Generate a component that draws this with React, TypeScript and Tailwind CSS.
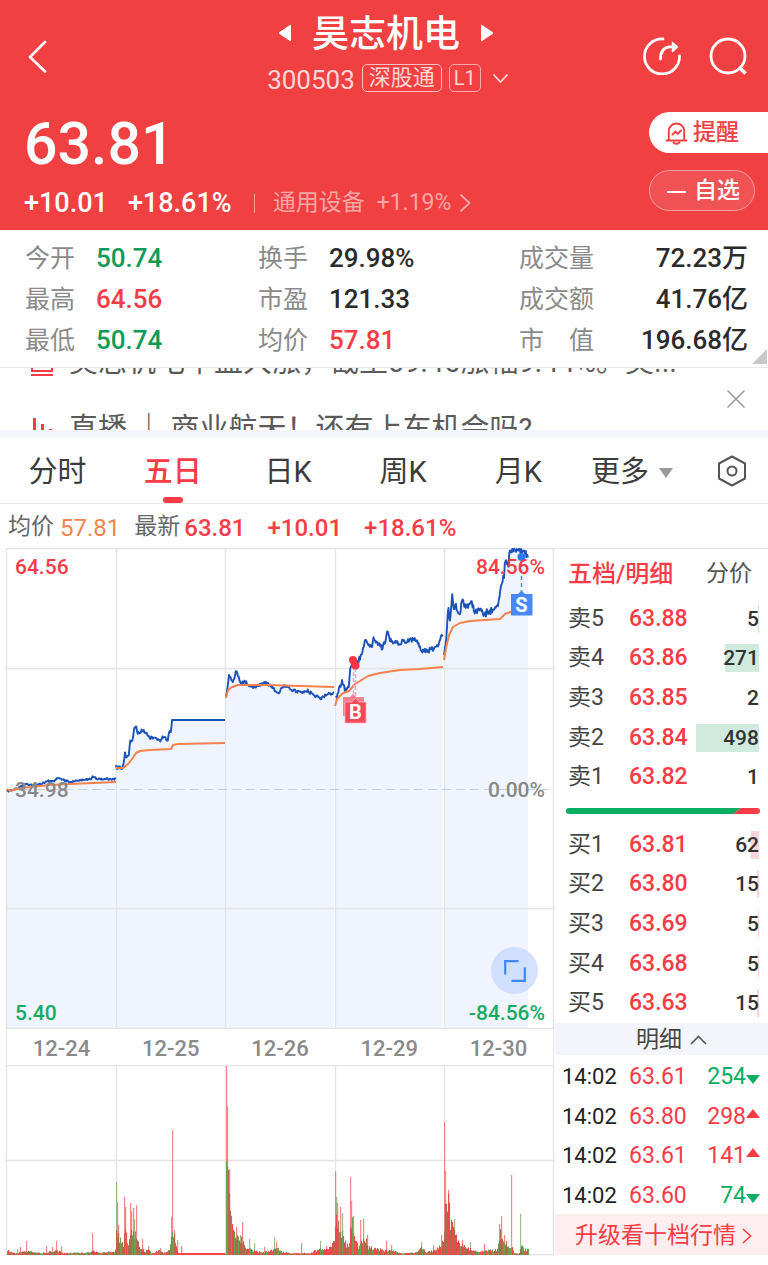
import React from "react";

type Pt = [number, number];

const QUOTES: { label: string; value: string; tone: string }[][] = [
  [
    { label: "今开", value: "50.74", tone: "text-[#0c9b58]" },
    { label: "最高", value: "64.56", tone: "text-[#f73c47]" },
    { label: "最低", value: "50.74", tone: "text-[#0c9b58]" },
  ],
  [
    { label: "换手", value: "29.98%", tone: "text-[#2b2b2b]" },
    { label: "市盈", value: "121.33", tone: "text-[#2b2b2b]" },
    { label: "均价", value: "57.81", tone: "text-[#f73c47]" },
  ],
  [
    { label: "成交量", value: "72.23万", tone: "text-[#2b2b2b]" },
    { label: "成交额", value: "41.76亿", tone: "text-[#2b2b2b]" },
    { label: "市　值", value: "196.68亿", tone: "text-[#2b2b2b]" },
  ],
];

const TABS = ["分时", "五日", "日K", "周K", "月K"];

const ASKS = [
  { name: "卖5", price: "63.88", vol: 5 },
  { name: "卖4", price: "63.86", vol: 271 },
  { name: "卖3", price: "63.85", vol: 2 },
  { name: "卖2", price: "63.84", vol: 498 },
  { name: "卖1", price: "63.82", vol: 1 },
];

const BIDS = [
  { name: "买1", price: "63.81", vol: 62 },
  { name: "买2", price: "63.80", vol: 15 },
  { name: "买3", price: "63.69", vol: 5 },
  { name: "买4", price: "63.68", vol: 5 },
  { name: "买5", price: "63.63", vol: 15 },
];

const TRADES = [
  { time: "14:02", price: "63.61", vol: 254, up: false },
  { time: "14:02", price: "63.80", vol: 298, up: true },
  { time: "14:02", price: "63.61", vol: 141, up: true },
  { time: "14:02", price: "63.60", vol: 74, up: false },
];

const DATES = ["12-24", "12-25", "12-26", "12-29", "12-30"];

// Price traces, one list per trading day; y grows downwards from the 64.56 line.
const PRICE: Pt[][] = [
  [[7, 241], [8, 243], [11, 242], [15, 241], [20, 239], [26, 236], [33, 237], [40, 236], [48, 233], [54, 233], [57, 230], [63, 232], [70, 234], [80, 232], [91, 231], [93, 228], [97, 231], [105, 231], [116, 231]],
  [[116, 218], [117, 222], [119, 218], [121, 222], [123, 219], [125, 205], [127, 209], [129, 207], [130, 192], [132, 195], [134, 182], [136, 176], [137, 184], [140, 186], [142, 182], [147, 186], [150, 190], [155, 189], [160, 193], [163, 189], [168, 192], [169, 185], [171, 183], [172, 172]],
  [[226, 149], [228, 137], [229, 126], [231, 132], [234, 133], [236, 123], [238, 127], [241, 136], [245, 133], [249, 138], [255, 139], [265, 135], [272, 138], [275, 143], [279, 144], [284, 138], [290, 141], [300, 144], [308, 143], [315, 148], [321, 150], [327, 146], [334, 145]],
  [[336, 150], [338, 144], [342, 134], [345, 142], [349, 138], [350, 124], [353, 112], [355, 117], [358, 114], [361, 107], [366, 91], [368, 97], [371, 100], [374, 90], [378, 96], [382, 100], [385, 94], [387, 83], [390, 92], [396, 95], [410, 92], [417, 92], [421, 102], [430, 102], [437, 100], [440, 90], [442, 86], [443, 89]],
  [[444, 107], [446, 97], [448, 60], [450, 70], [452, 47], [454, 64], [456, 57], [459, 67], [463, 53], [466, 60], [470, 53], [475, 62], [480, 61], [484, 66], [490, 63], [498, 57], [500, 42], [504, 27], [506, 7], [508, 20], [510, 1], [524, 1], [526, 5], [528, 8]],
];

const AVERAGE: Pt[][] = [
  [[7, 241], [10, 243], [16, 241], [30, 239], [50, 237], [70, 236], [116, 234]],
  [[116, 220], [123, 220], [128, 216], [132, 211], [136, 205], [140, 203], [150, 202], [171, 201], [173, 197], [178, 196], [225, 195]],
  [[226, 150], [228, 142], [232, 139], [238, 137], [248, 137], [270, 137], [300, 138], [334, 139]],
  [[335, 158], [337, 151], [343, 145], [349, 143], [355, 136], [360, 133], [368, 128], [380, 125], [400, 122], [420, 121], [443, 119]],
  [[444, 112], [446, 100], [449, 87], [453, 79], [460, 75], [470, 73], [500, 71], [505, 66], [520, 60]],
];

const JITTER = [1.6, 3, 3, 5, 8];

function rand(seed: number) {
  const v = Math.sin(seed * 127.1 + 11.7) * 43758.5453;
  return v - Math.floor(v);
}

function lerp(points: Pt[], x: number) {
  for (let i = 1; i < points.length; i++) {
    const [x0, y0] = points[i - 1];
    const [x1, y1] = points[i];
    if (x <= x1) return y0 + ((y1 - y0) * (x - x0)) / (x1 - x0 || 1);
  }
  return points[points.length - 1][1];
}

function trace(points: Pt[], amp: number): Pt[] {
  const out: Pt[] = [];
  const end = points[points.length - 1][0];
  for (let x = points[0][0]; x <= end; x += 0.75) {
    const y = lerp(points, x) + (rand(x) - 0.5) * amp;
    out.push([x, Math.max(1, y)]);
  }
  return out;
}

const TRACES = PRICE.map((p, i) => {
  const t = trace(p, JITTER[i]);
  return i === 1 ? [...t, [172, 172] as Pt, [225, 172] as Pt] : t;
});

const toPath = (p: Pt[]) => "M" + p.map(([x, y]) => `${x} ${y.toFixed(1)}`).join("L");

// Body of the volume histogram (x, height) and the single bars that stick out of it.
const VOLUME_BODY: Pt[] = [
  [7, 5], [16, 2], [26, 5], [40, 2], [56, 5], [64, 2], [90, 3], [93, 5], [100, 2], [115, 5],
  [116, 30], [120, 16], [123, 12], [125, 28], [128, 14], [131, 24], [137, 22], [139, 9], [145, 4], [148, 7], [151, 2], [159, 5], [163, 2], [169, 5],
  [171, 18], [173, 28], [175, 12], [178, 3], [182, 2], [225, 2],
  [226, 110], [228, 90], [229, 70], [231, 38], [234, 26], [238, 18], [242, 17], [246, 8], [252, 5], [262, 3], [272, 5], [275, 10], [280, 4], [290, 2], [310, 2], [320, 8], [326, 5], [330, 10], [334, 14],
  [336, 48], [340, 30], [343, 22], [346, 10], [349, 12], [351, 42], [354, 24], [358, 8], [362, 16], [364, 22], [368, 9], [376, 7], [385, 5], [392, 5], [400, 2], [416, 3], [421, 8], [426, 3], [436, 6], [441, 13], [443, 16],
  [445, 60], [448, 62], [450, 34], [454, 28], [457, 14], [463, 10], [470, 7], [480, 4], [497, 6], [500, 24], [503, 20], [507, 12], [512, 8], [514, 2], [519, 2], [521, 14], [524, 6], [528, 6],
];

const SPIKES: { x: number; h: number; up: boolean }[] = [
  { x: 17, h: 6, up: true }, { x: 20, h: 8, up: true }, { x: 26, h: 14, up: true }, { x: 46, h: 9, up: true },
  { x: 52, h: 8, up: true }, { x: 56, h: 14, up: true }, { x: 61, h: 9, up: false }, { x: 92, h: 22, up: true },
  { x: 116, h: 73, up: false }, { x: 117, h: 53, up: true }, { x: 118, h: 30, up: true }, { x: 124, h: 58, up: true },
  { x: 125, h: 48, up: true }, { x: 130, h: 52, up: true }, { x: 131, h: 44, up: true }, { x: 133, h: 47, up: true },
  { x: 134, h: 36, up: false }, { x: 136, h: 50, up: true }, { x: 142, h: 16, up: true }, { x: 148, h: 9, up: false },
  { x: 160, h: 7, up: true }, { x: 171, h: 38, up: true }, { x: 172, h: 125, up: true }, { x: 174, h: 25, up: true },
  { x: 177, h: 15, up: true }, { x: 181, h: 9, up: true }, { x: 226, h: 189, up: true }, { x: 227, h: 149, up: true },
  { x: 229, h: 86, up: true }, { x: 236, h: 28, up: true }, { x: 240, h: 20, up: false }, { x: 242, h: 33, up: true },
  { x: 249, h: 16, up: false }, { x: 254, h: 12, up: false }, { x: 264, h: 8, up: true }, { x: 274, h: 18, up: false },
  { x: 276, h: 13, up: true }, { x: 301, h: 12, up: true }, { x: 320, h: 14, up: false }, { x: 326, h: 9, up: true },
  { x: 335, h: 84, up: true }, { x: 336, h: 58, up: false }, { x: 337, h: 52, up: true }, { x: 340, h: 48, up: true },
  { x: 342, h: 42, up: false }, { x: 350, h: 78, up: true }, { x: 351, h: 54, up: true }, { x: 353, h: 39, up: true },
  { x: 360, h: 35, up: true }, { x: 363, h: 36, up: true }, { x: 367, h: 20, up: true }, { x: 386, h: 14, up: true },
  { x: 391, h: 10, up: false }, { x: 421, h: 13, up: false }, { x: 433, h: 10, up: true }, { x: 441, h: 20, up: true },
  { x: 444, h: 133, up: true }, { x: 445, h: 84, up: false }, { x: 448, h: 65, up: true }, { x: 454, h: 36, up: false },
  { x: 462, h: 15, up: true }, { x: 470, h: 13, up: false }, { x: 484, h: 11, up: true }, { x: 499, h: 31, up: true },
  { x: 501, h: 39, up: true }, { x: 504, h: 20, up: true }, { x: 511, h: 80, up: true }, { x: 520, h: 41, up: false },
];

const GRID_X = [6, 116, 225, 335, 444, 553];

function PriceChart() {
  return (
    <svg viewBox="0 0 555 481" className="block w-full" role="img" aria-label="五日走势">
      {TRACES.map((t, i) => (
        <path key={i} d={`${toPath(t)}V481H${t[0][0]}Z`} fill="#eff4fe" />
      ))}
      <path d={GRID_X.map((x) => `M${x + 0.5} 0V481`).join("") + "M6 .5H555M6 120.5H554M6 360.5H554M6 480.5H554"} stroke="#e3e4e6" strokeWidth="1.4" fill="none" />
      <path d="M8 241.5H552" stroke="#c6d0dc" strokeWidth="1.2" strokeDasharray="9 5" />
      {TRACES.map((t, i) => (
        <path key={i} d={toPath(t)} fill="none" stroke="#1c53b8" strokeWidth="1.900" strokeLinejoin="round" />
      ))}
      {AVERAGE.map((t, i) => (
        <path key={i} d={toPath(t)} fill="none" stroke="#f5814c" strokeWidth="2" strokeLinejoin="round" />
      ))}
      <g>
        <path d="M353.500 118V150M355.500 120V150" stroke="#f5a0b4" strokeWidth="1.4" strokeDasharray="4 2" />
        <circle cx="353" cy="112" r="4" fill="#f73647" />
        <circle cx="355.500" cy="117.500" r="4" fill="#f73647" />
        <path d="M343 149h7l3-3 3 3h8v19h-21z" fill="#f9808c" />
        <path d="M345 154h7l3.500-4 3.500 4h7v21h-21z" fill="#f84857" stroke="#fbb5bb" strokeWidth=".8" />
      </g>
      <g>
        <path d="M521.500 14V44" stroke="#4b8df8" strokeWidth="1.4" strokeDasharray="4 3" />
        <circle cx="521.500" cy="9" r="4" fill="#2b7bfb" />
        <path d="M511 46h7l3.500-3.500 3.500 3.500h7.500v21.500h-21.500z" fill="#478af7" />
      </g>
    </svg>
  );
}

function VolumeChart() {
  const bars: React.ReactElement[] = [];
  for (let x = 7; x < 529; x++) {
    const quiet = x > 178 && x < 225;
    const h = quiet ? 2 : lerp(VOLUME_BODY, x) * (0.6 + 0.5 * rand(x * 3));
    const hue = rand(x * 7);
    const fill = quiet || hue < 0.36 ? "#f0474a" : hue < 0.74 ? "#b2694a" : "#6fa052";
    bars.push(<rect key={x} x={x} y={190 - h} width="1.100" height={h} fill={fill} />);
  }
  return (
    <svg viewBox="0 0 555 191" className="block w-full" role="img" aria-label="成交量">
      <path d={GRID_X.map((x) => `M${x + 0.5} 0V190`).join("") + "M6 .5H554M6 95.500H554M6 189.500H554"} stroke="#e3e4e6" strokeWidth="1.4" fill="none" />
      {SPIKES.map((s) => (
        <rect key={s.x} x={s.x} y={190 - s.h} width="1.200" height={s.h} fill={s.up ? "#f4696c" : "#86ad6c"} opacity=".8" />
      ))}
      {bars}
    </svg>
  );
}

function Book({ rows, side }: { rows: typeof ASKS; side: "ask" | "bid" }) {
  return (
    <table className="h-[198px] w-full border-collapse">
      <tbody>
        {rows.map((r) => (
          <tr key={r.name} className="text-[23px] leading-7">
            <th scope="row" className="w-[74px] p-0 pl-[13px] text-left font-normal text-[#444]">{r.name}</th>
            <td className="p-0 font-medium text-[#f73c47]">{r.price}</td>
            <td className="p-0 pr-[9px]">
              <div className="relative flex h-7 items-center justify-end text-[21px] font-medium text-[#333]">
                <span
                  className={`absolute inset-y-0 right-0 ${side === "ask" ? "bg-[#d0ebdd]" : "bg-[#fdd5d8]"}`}
                  style={{ width: Math.max(r.vol > 2 ? 1 : 0, Math.round(r.vol / 7.9)) }}
                />
                <span className="relative">{r.vol}</span>
              </div>
            </td>
          </tr>
        ))}
      </tbody>
    </table>
  );
}

export default function App() {
  return (
    <div className="min-h-[1265px] bg-white font-['Roboto','Noto_Sans_CJK_SC',sans-serif] text-[#333]">
      <header className="bg-[#f04042] text-white">
        <div className="grid h-28 grid-cols-[1fr_auto_1fr]">
          <button aria-label="返回" className="flex w-16 items-center pl-7">
            <svg width="19" height="34" viewBox="0 0 19 34" fill="none" stroke="currentColor" strokeWidth="2.600" strokeLinecap="round" strokeLinejoin="round"><path d="M17 3 2 18l15 14.500" /></svg>
          </button>
          <div className="flex flex-col items-center pt-3 pl-1">
            <div className="flex h-[46px] items-center gap-5">
              <button aria-label="上一只" className="pb-1">
                <svg width="14" height="18" viewBox="0 0 14 18" fill="currentColor"><path d="M1.500 8 12 1q1-.5 1 .6v14.800q0 1.100-1 .6L1.500 10q-1.200-1 0-2z" /></svg>
              </button>
              <h1 className="text-[37px] leading-[46px] font-medium">昊志机电</h1>
              <button aria-label="下一只" className="pb-1">
                <svg width="14" height="18" viewBox="0 0 14 18" fill="currentColor"><path d="M12.500 8 2 1Q1 .5 1 1.600v14.800q0 1.100 1 .6L12.500 10q1.200-1 0-2z" /></svg>
              </button>
            </div>
            <div className="mt-1.5 flex h-7 items-center gap-[7px] pl-1 text-[#fdd6d6]">
              <span className="pt-1 text-[26px] leading-7">300503</span>
              <span className="flex h-7 items-center rounded-[5px] border border-[#fac0c0] px-1.5 text-[22px] leading-none">深股通</span>
              <span className="flex h-7 items-center rounded-[5px] border border-[#f9a9aa] px-1 text-xl leading-none">L1</span>
              <button aria-label="展开" className="pl-1">
                <svg width="17" height="11" viewBox="0 0 17 11" fill="none" stroke="currentColor" strokeWidth="1.800"><path d="m1.500 1.500 7 7.500 7-7.500" /></svg>
              </button>
            </div>
          </div>
          <div className="flex items-center justify-end gap-7 pr-[21px]">
            <button aria-label="分享">
              <svg width="38" height="38" viewBox="0 0 38 38" fill="none" stroke="currentColor" strokeWidth="2.800" strokeLinecap="round" strokeLinejoin="round"><path d="M20 2a17.500 17.500 0 1 0 16.500 17M17.500 22c0-7 2.500-11.500 9-12.200h6" /><path d="M29.500 5.500 34.500 10l-5 4.500z" fill="currentColor" strokeWidth="1.500" /></svg>
            </button>
            <button aria-label="搜索">
              <svg width="38" height="38" viewBox="0 0 38 38" fill="none" stroke="currentColor" strokeWidth="2.800"><circle cx="19" cy="19" r="17" /><path d="m30 30 6.500 6.500" strokeWidth="3.600" /></svg>
            </button>
          </div>
        </div>
        <div className="flex justify-between">
          <div className="pl-6">
            <div className="flex h-[62px] items-center pt-0.5 text-[59px] font-medium">63.81</div>
            <div className="flex h-14 items-center pt-0.5 text-[27px] font-medium">
              <span>+10.01</span>
              <span className="ml-5">+18.61%</span>
              <span className="ml-[22px] h-[19px] w-px bg-[#f8a0a1]" />
              <a href="#sector" className="ml-[18px] flex items-center text-[23px] font-normal text-[#f9a6a7]">
                通用设备<span className="ml-3">+1.19%</span>
                <svg width="12" height="20" viewBox="0 0 12 20" className="ml-2" fill="none" stroke="currentColor" strokeWidth="1.800"><path d="m1.500 1.500 9 8.500-9 8.500" /></svg>
              </a>
            </div>
          </div>
          <div className="flex flex-col items-end gap-[17px]">
            <button className="flex h-[41px] w-[119px] items-center gap-[5px] rounded-l-full bg-white pt-0.5 pl-4 text-[23px] font-medium text-[#f04042]">
              <svg width="23" height="24" viewBox="0 0 23 24" fill="none" stroke="currentColor" strokeWidth="1.900" strokeLinecap="round" strokeLinejoin="round"><path d="M1.500 18.500h20M3.800 18V9a7.700 7.500 0 0 1 15.400 0v9M8.500 20.500q3 2.500 6 0M7.500 12.500l3-3 2 2.500 3.500-3.500" /></svg>
              提醒
            </button>
            <button className="mr-[13px] flex h-[41px] w-[106px] items-center gap-2 rounded-full border border-[#f8a0a1] bg-[#f15355] pt-0.5 pl-[17px] text-[23px] font-medium">
              <span className="h-0.5 w-[19px] bg-white" />
              自选
            </button>
          </div>
        </div>
      </header>

      <section className="relative grid grid-cols-[233fr_261fr_229fr] border-b border-[#e8e8e8] pt-2 pr-5 pb-1.5 pl-[25px]">
        {QUOTES.map((col, i) => (
          <dl key={i}>
            {col.map((q) => (
              <div key={q.label} className={`flex h-[41px] items-center ${i === 2 ? "justify-between" : ""}`}>
                <dt className={`text-[25px] text-[#8a8a8a] ${i === 2 ? "" : "w-[71px]"}`}>{q.label}</dt>
                <dd className={`text-[26px] font-medium ${q.tone}`}>{q.value}</dd>
              </div>
            ))}
          </dl>
        ))}
        <svg width="15" height="15" viewBox="0 0 15 15" className="absolute right-px bottom-[3px]" fill="#c8c8c8"><path d="M15 0v15H0z" /></svg>
      </section>

      <section className="flex h-[62px] justify-between overflow-hidden pr-[22px] pl-[30px] text-[29px] text-[#5a5a5a]">
        <div className="-mt-[39px]">
          <a href="#news" className="flex h-[67px] items-center gap-[15px] whitespace-nowrap">
            <svg width="24" height="26" viewBox="0 0 24 26" fill="none" stroke="#f73c47" strokeWidth="2"><path d="M2 2h20v19H2zM1 25h22" /></svg>
            <span>昊志机电午盘大涨，截至09:46涨幅9.44%。昊...</span>
          </a>
          <a href="#live" className="flex h-[67px] items-center gap-[15px] whitespace-nowrap">
            <svg width="24" height="26" viewBox="0 0 24 26" fill="none" stroke="#f73c47" strokeWidth="3"><path d="M4.500 1v23M12.500 7v17M20.500 12v12" /></svg>
            <span>直播 ｜ 商业航天！还有上车机会吗?</span>
          </a>
        </div>
        <button aria-label="关闭">
          <svg width="20" height="20" viewBox="0 0 20 20" fill="none" stroke="#999" strokeWidth="1.600"><path d="m1.500 1.500 17 17m0-17-17 17" /></svg>
        </button>
      </section>

      <div className="h-2 bg-[#f3f5fa]" />

      <nav className="grid h-[66px] grid-cols-[3fr_1fr] border-b border-[#e6e6e6] text-[29px] text-[#3c3c3c]">
        <div className="grid grid-cols-5">
          {TABS.map((t) =>
            t === "五日" ? (
              <button key={t} aria-current="page" className="relative pt-1 font-medium text-[#f73c47]">
                {t}
                <span className="absolute bottom-0 left-1/2 h-1.5 w-5 -translate-x-1/2 rounded-full bg-[#f73c47]" />
              </button>
            ) : (
              <button key={t} className="pt-1">{t}</button>
            ),
          )}
        </div>
        <div className="flex items-center justify-between pr-[21px] pl-[15px]">
          <button className="flex items-center gap-2.5 pt-1">
            更多
            <svg width="14" height="10" viewBox="0 0 14 10" fill="#999"><path d="M0 0h14L7 10z" /></svg>
          </button>
          <button aria-label="设置">
            <svg width="30" height="32" viewBox="0 0 30 32" fill="none" stroke="#555" strokeWidth="2" strokeLinejoin="round"><path d="M15 1.500 28 8.500v15L15 30.500 2 23.500v-15z" /><circle cx="15" cy="16" r="4.500" /></svg>
          </button>
        </div>
      </nav>

      <div className="flex h-11 items-center pt-[3px] pl-2 text-2xl text-[#f73c47]">
        <span className="text-[23px] text-[#666]">均价</span>
        <span className="ml-1.5 text-[#f0854d]">57.81</span>
        <span className="ml-3.5 text-[23px] text-[#666]">最新</span>
        <span className="ml-1 font-medium">63.81</span>
        <span className="ml-[22px] font-medium">+10.01</span>
        <span className="ml-[22px] font-medium">+18.61%</span>
      </div>

      <main className="grid grid-cols-[555fr_213fr]">
        <section>
          <div className="relative text-[21px] leading-6 font-medium">
            <PriceChart />
            <span className="absolute top-[7px] left-[15px] text-[#f73c47]">64.56</span>
            <span className="absolute top-[7px] right-2.5 text-[#f73c47]">84.56%</span>
            <span className="absolute top-[230px] left-[15px] text-[#888]">34.98</span>
            <span className="absolute top-[230px] right-2.5 text-[#888]">0.00%</span>
            <span className="absolute bottom-1 left-[15px] text-[#15ab61]">5.40</span>
            <span className="absolute right-2.5 bottom-1 text-[#15ab61]">-84.56%</span>
            <span className="absolute top-[153px] left-[345px] w-[21px] text-center text-xl leading-[22px] font-bold text-white">B</span>
            <span className="absolute top-[46px] left-[511px] w-[21px] text-center text-xl leading-[22px] font-bold text-white">S</span>
            <button aria-label="全屏" className="absolute right-[17px] bottom-[35px] flex size-[47px] items-center justify-center rounded-full bg-[#c5d8fd]/75">
              <svg width="22" height="22" viewBox="0 0 22 22" fill="none" stroke="#3f86f8" strokeWidth="2.200"><path d="M1.200 14.500V1.200H14.500M20.800 7.500V20.800H7.500" /></svg>
            </button>
          </div>
          <div className="mr-px ml-1.5 grid h-9 grid-cols-5 items-center border-x border-[#e3e4e6] pt-0.5 text-center text-[22px] font-medium text-[#8a8a8a]">
            {DATES.map((d) => (
              <span key={d}>{d}</span>
            ))}
          </div>
          <VolumeChart />
        </section>

        <section className="border-t border-[#e3e4e6]">
          <div className="flex h-[50px] items-center justify-between pr-4 pl-[13px]">
            <button className="text-2xl font-medium text-[#f73c47]">五档/明细</button>
            <button className="text-[23px] text-[#555]">分价</button>
          </div>
          <Book rows={ASKS} side="ask" />
          <div className="flex h-[28px] items-center pr-2 pl-[11px]">
            <svg viewBox="0 0 194 6" className="w-full"><path d="M3 0H175l-8 6H3A3 3 0 0 1 3 0z" fill="#07ae62" /><path d="M175 0h16a3 3 0 0 1 0 6h-24z" fill="#f73c47" /></svg>
          </div>
          <Book rows={BIDS} side="bid" />
          <button className="flex h-8 w-full items-center justify-center gap-2 bg-[#f3f5fa] pt-0.5 pr-4 pl-9 text-[23px] text-[#444]">
            明细
            <svg width="17" height="10" viewBox="0 0 17 10" fill="none" stroke="#555" strokeWidth="1.600"><path d="m1 9 7.500-7.500L16 9" /></svg>
          </button>
          <table className="h-[159px] w-full border-collapse">
            <tbody>
              {TRADES.map((t, i) => (
                <tr key={i} className="text-[23px] leading-7">
                  <td className="w-[74px] p-0 pt-1 pl-[7px] text-[22px] text-[#222]">{t.time}</td>
                  <td className="p-0 pt-1 text-[#f73c47]">{t.price}</td>
                  <td className="p-0 pt-1 pr-2">
                    <div className={`flex items-center justify-end ${t.up ? "text-[#f73c47]" : "text-[#0aae62]"}`}>
                      {t.vol}
                      {t.up ? (
                        <svg width="14" height="16" viewBox="0 0 14 16" fill="currentColor"><path d="M7 0 14 9H0z" /></svg>
                      ) : (
                        <svg width="14" height="16" viewBox="0 0 14 16" fill="currentColor"><path d="M7 15 14 6H0z" /></svg>
                      )}
                    </div>
                  </td>
                </tr>
              ))}
            </tbody>
          </table>
          <a href="#upgrade" className="flex h-[41px] items-center justify-center gap-1.5 bg-[#feeeef] pt-[3px] pl-1 text-[23px] whitespace-nowrap text-[#f73c47]">
            升级看十档行情
            <svg width="10" height="16" viewBox="0 0 10 16" fill="none" stroke="currentColor" strokeWidth="1.600"><path d="m1 1 7.500 7L1 15" /></svg>
          </a>
        </section>
      </main>
    </div>
  );
}
